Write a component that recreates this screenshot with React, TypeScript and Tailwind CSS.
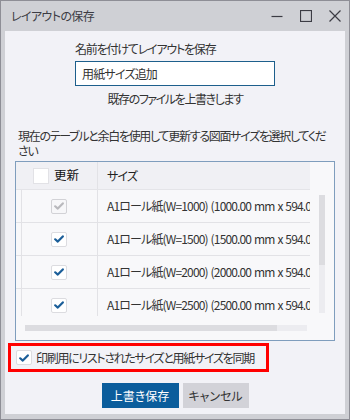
import React from "react";

const font = "font-['Noto_Sans_CJK_JP',sans-serif] [font-feature-settings:'palt']";

function Check({ disabled = false }: { disabled?: boolean }) {
  return (
    <svg width="10" height="8" viewBox="0 0 10 8">
      <path
        d="M1.2 4.3 L3.8 6.6 L8.8 1.4"
        fill="none"
        stroke={disabled ? "#b9b9bd" : "#1b5e99"}
        strokeWidth="2.2"
        strokeLinecap="round"
        strokeLinejoin="round"
      />
    </svg>
  );
}

function Box({ checked, disabled }: { checked?: boolean; disabled?: boolean }) {
  return (
    <div
      className={`w-[16px] h-[15px] rounded-[2px] border flex items-center justify-center shrink-0 ${
        disabled ? "bg-[#f7f7f9] border-[#d2d2d6]" : "bg-white border-[#dcdce0]"
      }`}
    >
      {checked && <Check disabled={disabled} />}
    </div>
  );
}

const rows = [
  { w: "1000", checked: true, disabled: true },
  { w: "1500", checked: true },
  { w: "2000", checked: true },
  { w: "2500", checked: true },
];

export default function App() {
  return (
    <div className={`w-[350px] h-[420px] border border-[#8e8e96] bg-[#cfd0d5] flex flex-col text-[#333] ${font}`}>
      {/* Title bar */}
      <div className="h-[30px] flex items-center pl-[10px] pr-[8px] shrink-0">
        <span className="text-[12px] tracking-[-0.6px] text-[#3c3c44] whitespace-nowrap">レイアウトの保存</span>
        <div className="ml-auto flex items-center gap-[17px]">
          <svg width="12" height="12" viewBox="0 0 12 12">
            <path d="M0.5 6.5 H11.5" stroke="#3c3c44" strokeWidth="1.2" />
          </svg>
          <svg width="12" height="12" viewBox="0 0 12 12">
            <rect x="0.5" y="0.5" width="11" height="11" fill="none" stroke="#3c3c44" strokeWidth="1.2" />
          </svg>
          <svg width="12" height="12" viewBox="0 0 12 12">
            <path d="M0.5 0.5 L11.5 11.5 M11.5 0.5 L0.5 11.5" stroke="#3c3c44" strokeWidth="1.2" />
          </svg>
        </div>
      </div>

      {/* Body */}
      <div className="flex-1 mx-[4px] mb-[5px] bg-[#f2f2f7] flex flex-col">
        <div className="w-[200px] mx-auto pt-[10px] flex flex-col">
          <div className="text-[12px] leading-[16px] tracking-[-1.2px] whitespace-nowrap">名前を付けてレイアウトを保存</div>
          <div className="mt-[4px] h-[25px] border border-[#1d5f8c] bg-white flex items-center pl-[6px] text-[12px] tracking-[-0.8px]">
            用紙サイズ追加
          </div>
        </div>
        <div className="mt-[5px] text-center text-[12px] leading-[16px] tracking-[-1.4px] whitespace-nowrap">
          既存のファイルを上書きします
        </div>

        <div className="mt-[21px] px-[13px] text-[12px] leading-[15px] tracking-[-1.3px] whitespace-nowrap">
          現在のテーブルと余白を使用して更新する図面サイズを選択してくだ
          <br />
          さい
        </div>

        {/* Table */}
        <div className="mt-[3px] ml-[10px] w-[320px] h-[180px] border border-[#7f9dbd] bg-[#f8f8fa] flex flex-col">
          <div className="flex">
            <div className="w-[294px] h-[154px] overflow-hidden flex flex-col">
              <div className="h-[28px] bg-[#f0f0f4] border-b border-[#e4e4e8] flex shrink-0">
                <div className="w-[82px] border-r border-[#e2e2e6] flex items-center pl-[17px] gap-[5px]">
                  <div className="w-[16px] h-[16px] bg-white border border-[#e2e2e6]" />
                  <span className="text-[12.5px] text-[#111]">更新</span>
                </div>
                <div className="flex-1 flex items-center pl-[9px] text-[12px] tracking-[-0.8px] text-[#222]">サイズ</div>
              </div>
              {rows.map((r) => (
                <div key={r.w} className="h-[33px] border-b border-[#e2e2e6] flex shrink-0">
                  <div className="w-[6px] border-r border-[#e2e2e6]" />
                  <div className="w-[76px] border-r border-[#e2e2e6] flex items-center justify-center pr-[2px]">
                    <Box checked={r.checked} disabled={r.disabled} />
                  </div>
                  <div className="flex-1 flex items-center pl-[9px] text-[12px] tracking-[-0.85px] [word-spacing:1px] whitespace-nowrap overflow-hidden">
                    A1ロール紙(W={r.w}) ({r.w}.00 mm x 594.00 mm)
                  </div>
                </div>
              ))}
            </div>
            <div className="ml-[9px] pt-[33px]">
              <div className="w-[6px] h-[118px] bg-[#ececf0] flex flex-col">
                <div className="h-[70px] bg-[#dcdce0]" />
              </div>
            </div>
          </div>
          <div className="mt-[9px] ml-[9px] w-[282px] h-[6px] bg-[#ececf0] flex">
            <div className="w-[252px] bg-[#dcdce0]" />
          </div>
        </div>

        {/* Sync option */}
        <div className="mt-[2px] ml-[3px] w-[261px] h-[29px] border-[3px] border-[#ff0000] flex items-center pl-[5px] gap-[4px]">
          <Box checked />
          <span className="text-[12px] tracking-[-1.3px] whitespace-nowrap">印刷用にリストされたサイズと用紙サイズを同期</span>
        </div>

        {/* Buttons */}
        <div className="mt-[11px] flex justify-center gap-[4px]">
          <button className="w-[77px] h-[25px] bg-[#0b5d9c] text-white text-[12px]">上書き保存</button>
          <button className="w-[66px] h-[25px] bg-[#d2d2d8] text-[#333] text-[12px]">キャンセル</button>
        </div>
      </div>
    </div>
  );
}
